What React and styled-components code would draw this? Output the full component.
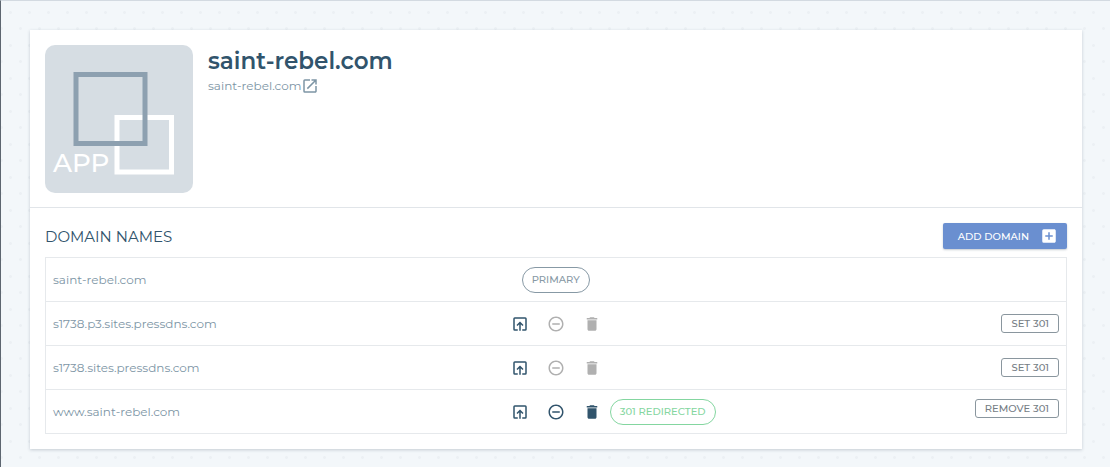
import React from 'react';
import styled, { createGlobalStyle } from 'styled-components';
import { MdAddBox, MdDelete, MdOpenInNew, MdRemoveCircleOutline } from 'react-icons/md';

const GlobalStyle = createGlobalStyle`
  * {
    box-sizing: border-box;
  }

  body {
    margin: 0;
    font-family: Montserrat, Inter, sans-serif;
    font-size: 12px;
    color: #7d95a5;
    background: #f3f7fa;
  }

  button {
    font-family: inherit;
    cursor: pointer;
  }
`;

const Page = styled.div`
  min-height: 100vh;
  padding: 29px 28px 18px 29px;
  border-top: 1px solid #d3dae1;
  border-left: 1px solid #5d6670;
  background-color: #f3f7fa;
  background-image: radial-gradient(circle, #ecf0f4 1px, transparent 2px),
    radial-gradient(circle, #ecf0f4 1px, transparent 2px);
  background-size: 19px 33px;
  background-position: 0 -5px, 10px 11px;
`;

const Card = styled.main`
  background: #fff;
  box-shadow: 0 1px 3px rgba(60, 80, 100, 0.25);
`;

const Header = styled.header`
  display: flex;
  gap: 15px;
  padding: 15px 15px 14px;
  border-bottom: 1px solid #e1e5e9;
`;

const AppLogo = styled.svg`
  flex: none;
  width: 148px;
  height: 148px;
`;

const Title = styled.h1`
  margin: 0;
  font-size: 23px;
  line-height: 32px;
  font-weight: 600;
  color: #31546c;
`;

const SiteLink = styled.a`
  display: flex;
  align-items: center;
  line-height: 18px;
  color: inherit;
  text-decoration: none;
`;

const Section = styled.section`
  padding: 15px;
`;

const SectionHeader = styled.div`
  display: flex;
  align-items: center;
  justify-content: space-between;
  margin-bottom: 8px;
`;

const SectionTitle = styled.h2`
  margin: 0;
  font-size: 15px;
  font-weight: 400;
  color: #31546c;
`;

const AddButton = styled.button`
  display: flex;
  align-items: center;
  gap: 11px;
  height: 26px;
  padding: 0 9px 0 15px;
  border: 0;
  border-radius: 2px;
  font-size: 10px;
  font-weight: 500;
  color: #fff;
  background: #6a8fd0;
  box-shadow: 0 1px 2px rgba(60, 80, 100, 0.3);
`;

const Table = styled.table`
  width: 100%;
  table-layout: fixed;
  border-collapse: collapse;
  border: 1px solid #e6e9ec;
`;

const Row = styled.tr`
  height: 44px;
  border-bottom: 1px solid #e6e9ec;
`;

const Cell = styled.td`
  width: ${(props) => props.$width};
  padding: ${(props) => (props.$top ? '9px 7px 0' : '0 7px')};
  text-align: ${(props) => props.$align || 'left'};
  vertical-align: ${(props) => (props.$top ? 'top' : 'middle')};
`;

const Actions = styled.div`
  display: flex;
  align-items: center;
`;

const IconButton = styled.button`
  display: flex;
  width: 36px;
  padding: 0 9px;
  border: 0;
  background: none;
  color: #31546c;

  &:disabled {
    color: #b0b0b0;
    cursor: default;
  }
`;

const Pill = styled.span`
  display: inline-flex;
  align-items: center;
  height: 26px;
  margin-left: ${(props) => (props.$indent ? '20px' : '0')};
  padding: 0 9px;
  border: 1px solid;
  border-radius: 13px;
  font-size: 10px;
  font-weight: 500;
  color: ${(props) => props.$color};
`;

const RedirectButton = styled.button`
  display: inline-flex;
  align-items: center;
  height: 19px;
  padding: 0 9px;
  border: 1px solid #8a969e;
  border-radius: 3px;
  font-size: 10px;
  font-weight: 500;
  color: #757d84;
  background: #fff;
  vertical-align: top;
`;

const domains = [
  { name: 'saint-rebel.com', primary: true },
  { name: 's1738.p3.sites.pressdns.com' },
  { name: 's1738.sites.pressdns.com' },
  { name: 'www.saint-rebel.com', redirected: true },
];

const PromoteIcon = () => (
  <svg width="18" height="18" viewBox="0 0 24 24" fill="none" stroke="currentColor" strokeWidth="2">
    <path d="M9 20H5a1 1 0 0 1-1-1V5a1 1 0 0 1 1-1h14a1 1 0 0 1 1 1v14a1 1 0 0 1-1 1h-4" />
    <path d="M12 21V10M8 14l4-4 4 4" />
  </svg>
);

const Logo = () => (
  <AppLogo viewBox="0 0 148 148" role="img" aria-label="App">
    <rect width="148" height="148" rx="10" fill="#d6dde3" />
    <rect x="72" y="72.5" width="54.5" height="54.5" fill="none" stroke="#fff" strokeWidth="5" />
    <rect x="31" y="29.5" width="69" height="69" fill="none" stroke="#8da0b0" strokeWidth="5" />
    <text x="8" y="127" fontSize="26" fontWeight="500" fill="#fff">APP</text>
  </AppLogo>
);

const DomainRow = ({ name, primary, redirected }) => (
  <Row>
    <Cell $width="44%">{name}</Cell>
    <Cell $width="44%">
      {primary ? (
        <Pill $indent $color="#8799a5">PRIMARY</Pill>
      ) : (
        <Actions>
          <IconButton aria-label="Make primary"><PromoteIcon /></IconButton>
          <IconButton aria-label="Unlink" disabled={!redirected}><MdRemoveCircleOutline size={18} /></IconButton>
          <IconButton aria-label="Delete" disabled={!redirected}><MdDelete size={18} /></IconButton>
          {redirected && <Pill $color="#84d6a0">301 REDIRECTED</Pill>}
        </Actions>
      )}
    </Cell>
    <Cell $width="12%" $align="right" $top={redirected}>
      {!primary && <RedirectButton>{redirected ? 'REMOVE 301' : 'SET 301'}</RedirectButton>}
    </Cell>
  </Row>
);

const App = () => (
  <>
    <GlobalStyle />
    <Page>
      <Card>
        <Header>
          <Logo />
          <div>
            <Title>saint-rebel.com</Title>
            <SiteLink href="#site">
              saint-rebel.com
              <MdOpenInNew size={18} />
            </SiteLink>
          </div>
        </Header>
        <Section>
          <SectionHeader>
            <SectionTitle>DOMAIN NAMES</SectionTitle>
            <AddButton>
              ADD DOMAIN
              <MdAddBox size={18} />
            </AddButton>
          </SectionHeader>
          <Table>
            <tbody>
              {domains.map((domain) => (
                <DomainRow key={domain.name} {...domain} />
              ))}
            </tbody>
          </Table>
        </Section>
      </Card>
    </Page>
  </>
);

export default App;
